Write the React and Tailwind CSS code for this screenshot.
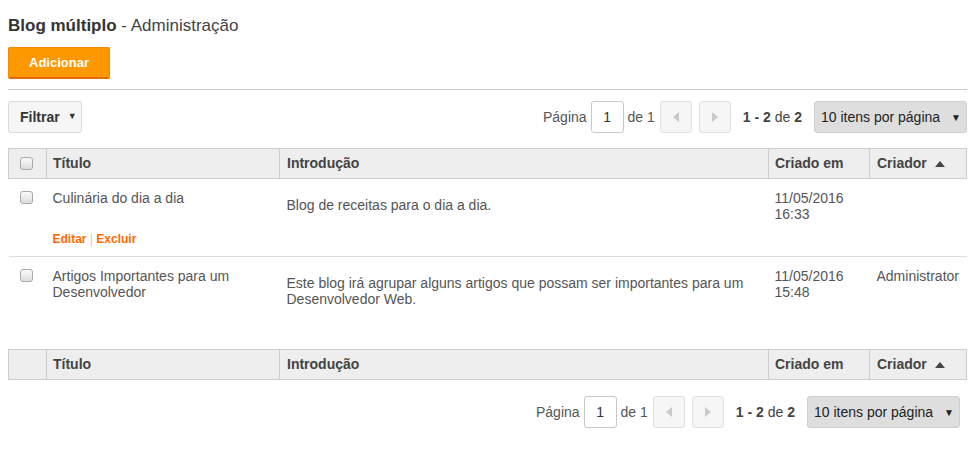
import React from "react";

const font = { fontFamily: '"Liberation Sans", Arial, sans-serif' };

function Checkbox() {
  return (
    <span className="inline-block h-[13px] w-[13px] rounded-[3px] border border-[#a9a9a9] bg-gradient-to-b from-[#fafafa] to-[#dcdcdc]" />
  );
}

function SortUp() {
  return (
    <svg width="10" height="6" viewBox="0 0 10 6" className="ml-[8px] inline-block">
      <path d="M5 0 L10 6 L0 6 Z" fill="#444" />
    </svg>
  );
}

function Arrow({ dir }) {
  return (
    <svg width="6" height="10" viewBox="0 0 6 10">
      {dir === "left" ? <path d="M6 0 L6 10 L0 5 Z" fill="#c8c8c8" /> : <path d="M0 0 L6 5 L0 10 Z" fill="#c8c8c8" />}
    </svg>
  );
}

function Pager() {
  return (
    <div className="flex items-center text-[14px] text-[#555]">
      <span className="mr-[4px]">Página</span>
      <span className="flex h-[32px] w-[33px] items-center justify-center rounded-[3px] border border-[#c8c8c8] bg-white text-[#333]">1</span>
      <span className="ml-[4px] mr-[5px]">de 1</span>
      <span className="flex h-[32px] w-[32px] items-center justify-center rounded-[3px] border border-[#e0e0e0] bg-[#f6f6f6]">
        <Arrow dir="left" />
      </span>
      <span className="ml-[7px] flex h-[32px] w-[32px] items-center justify-center rounded-[3px] border border-[#e0e0e0] bg-[#f6f6f6]">
        <Arrow dir="right" />
      </span>
      <span className="ml-[12px] text-[#444]">
        <b>1 - 2</b> de <b>2</b>
      </span>
      <span className="ml-[12px] flex h-[32px] w-[153px] items-center justify-between rounded-[3px] border border-[#cfcfcf] bg-[#dedede] pl-[6px] pr-[5px] text-[#222]">
        10 itens por página
        <span className="text-[10px]">▼</span>
      </span>
    </div>
  );
}

function HeaderRow({ withCheckbox }) {
  return (
    <tr className="h-[30px] bg-[#eeeeee] text-left text-[14px] font-bold text-[#444]">
      <th className="w-[38px] border border-[#cccccc] pl-[11px] text-left align-middle">
        {withCheckbox && <span className="relative top-[2px]"><Checkbox /></span>}
      </th>
      <th className="w-[233px] border border-[#cccccc] pl-[6px]">Título</th>
      <th className="w-[489px] border border-[#cccccc] pl-[7px]">Introdução</th>
      <th className="w-[101px] border border-[#cccccc] pl-[6px]">Criado em</th>
      <th className="border border-[#cccccc] pl-[7px]">
        <span className="flex items-center">
          Criador
          <SortUp />
        </span>
      </th>
    </tr>
  );
}

const rows = [
  {
    title: ["Culinária do dia a dia"],
    intro: ["Blog de receitas para o dia a dia."],
    date: ["11/05/2016", "16:33"],
    creator: "",
    actions: true,
    bordered: true,
  },
  {
    title: ["Artigos Importantes para um", "Desenvolvedor"],
    intro: ["Este blog irá agrupar alguns artigos que possam ser importantes para um", "Desenvolvedor Web."],
    date: ["11/05/2016", "15:48"],
    creator: "Administrator",
    actions: false,
    bordered: false,
  },
];

export default function App() {
  return (
    <div style={font} className="min-h-[456px] w-[975px] bg-white px-[8px] pt-[13px] text-[#444]">
      <h1 className="text-[17px] leading-[25px] text-[#444]">
        <span className="font-bold text-[#333]">Blog múltiplo</span> - Administração
      </h1>

      <button className="mt-[9px] h-[32px] w-[102px] rounded-[2px] border border-[#f58a00] border-b-[2px] border-b-[#e86a00] bg-[#fd9800] text-[13px] font-bold text-white">
        Adicionar
      </button>

      <div className="mt-[10px] h-px bg-[#cccccc]" />

      <div className="mt-[11px] flex items-center justify-between">
        <button className="flex h-[32px] w-[74px] items-center rounded-[3px] border border-[#dcdcdc] bg-[#f6f6f6] pl-[11px] text-[14px] font-bold text-[#333]">
          Filtrar
          <span className="ml-[8px] text-[9px]">▼</span>
        </button>
        <Pager />
      </div>

      <table className="mt-[15px] w-[959px] table-fixed border-collapse">
        <thead>
          <HeaderRow withCheckbox />
        </thead>
        <tbody className="text-[14px] leading-[16px] text-[#555]">
          {rows.map((r, i) => (
            <tr key={i} className={r.bordered ? "h-[78px] border-b border-[#dddddd]" : "h-[78px]"}>
              <td className="pl-[11px] pt-[11px] text-left align-top">
                <span className="relative top-[1px]"><Checkbox /></span>
              </td>
              <td className="align-top pl-[6px] pt-[11px]">
                <div className="h-[41px]">
                  {r.title.map((t) => (
                    <div key={t}>{t}</div>
                  ))}
                </div>
                {r.actions && (
                  <div className="text-[12px] font-bold text-[#ff6a00]">
                    Editar <span className="font-normal text-[#ccc]">|</span> Excluir
                  </div>
                )}
              </td>
              <td className="align-top pl-[7px] pt-[18px]">
                {r.intro.map((t) => (
                  <div key={t}>{t}</div>
                ))}
              </td>
              <td className="align-top pl-[6px] pt-[11px]">
                {r.date.map((t) => (
                  <div key={t}>{t}</div>
                ))}
              </td>
              <td className="align-top pl-[7px] pt-[11px]">{r.creator}</td>
            </tr>
          ))}
          <tr className="h-[15px]">
            <td colSpan={5} />
          </tr>
        </tbody>
        <tfoot>
          <HeaderRow />
        </tfoot>
      </table>

      <div className="mt-[16px] flex justify-end pr-[7px]">
        <Pager />
      </div>
    </div>
  );
}
